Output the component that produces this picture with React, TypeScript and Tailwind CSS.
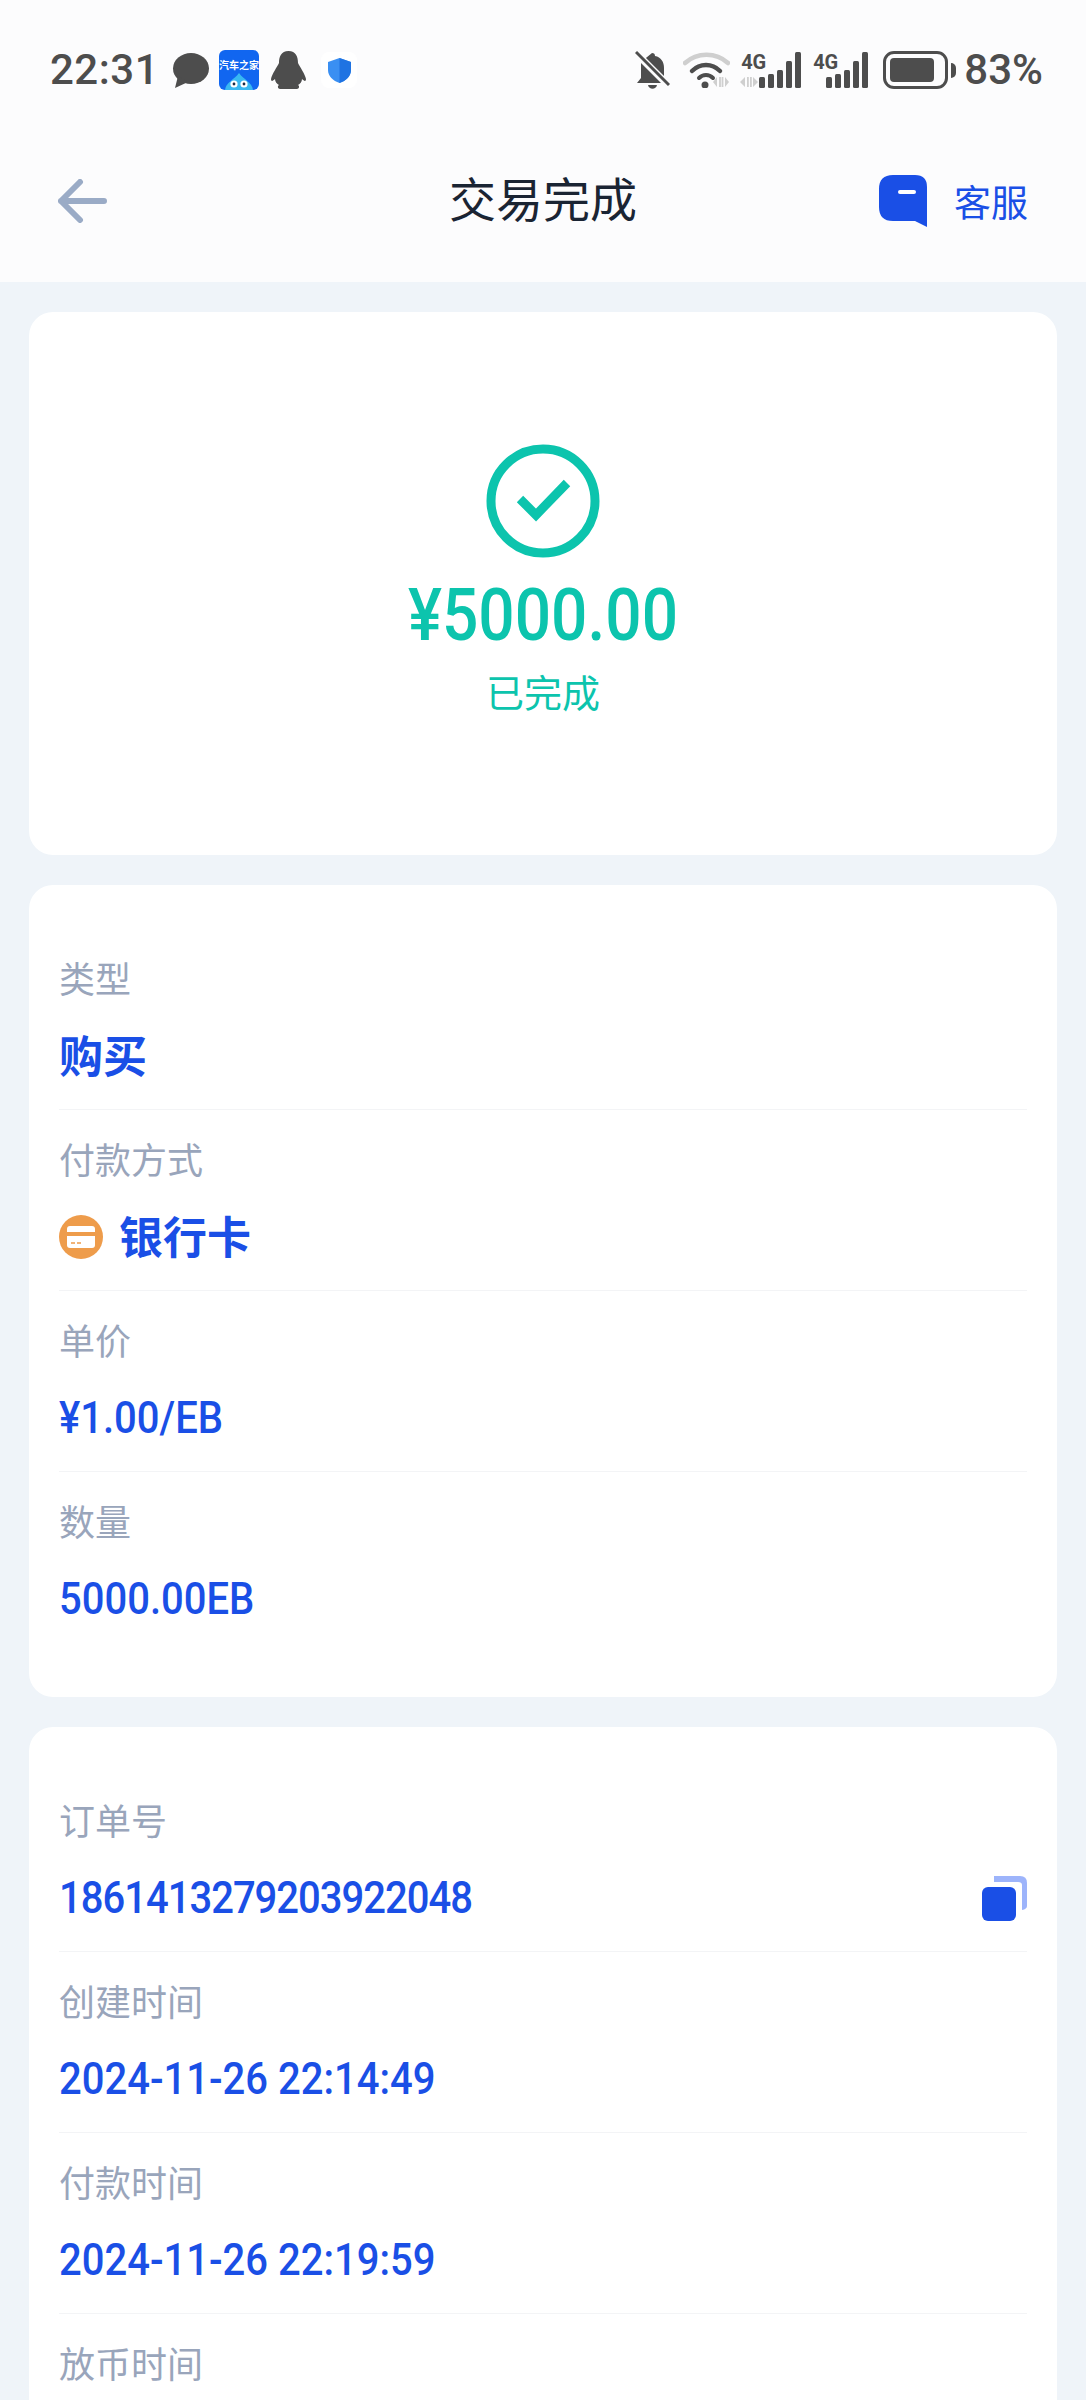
import React from 'react';

const FONT = "font-['Roboto','Noto_Sans_CJK_SC',sans-serif]";

interface DetailRow {
  label: string;
  value?: React.ReactNode;
  action?: React.ReactNode;
}

const ChatBubble = () => (
  <svg width="37" height="36" viewBox="0 0 37 36" fill="#4d4d4d">
    <ellipse cx="19" cy="16.5" rx="18" ry="15.5" />
    <path d="M6 24 L3 36 L16 30 Z" />
  </svg>
);

const AutoHomeBadge = () => (
  <div className="relative flex h-[40px] w-[40px] justify-center overflow-hidden rounded-[6px] bg-[#1166f0]">
    <span className="mt-[10px] text-[10px] leading-[12px] font-bold whitespace-nowrap text-white">汽车之家</span>
    <svg className="absolute bottom-0 left-0" width="40" height="17" viewBox="0 0 40 17">
      <path d="M6 17 C7 9 15 7 20 0 C25 7 33 9 34 17 Z" fill="#38b8f2" />
      <circle cx="15" cy="11" r="3.6" fill="#fff" />
      <circle cx="25" cy="11" r="3.6" fill="#fff" />
      <circle cx="15" cy="11" r="1.4" fill="#1c2a44" />
      <circle cx="25" cy="11" r="1.4" fill="#1c2a44" />
    </svg>
  </div>
);

const Penguin = () => (
  <svg width="35" height="38" viewBox="0 0 35 38" fill="#4d4d4d">
    <path d="M17.5 0 C25 0 27 6 27 12 C29 16 34 23 35 28 C35 31 33 30 31 28 C31 31 29 33 27 34 C29 35 28 38 26 38 L9 38 C7 38 6 35 8 34 C6 33 4 31 4 28 C2 30 0 31 0 28 C1 23 6 16 8 12 C8 6 10 0 17.5 0 Z" />
  </svg>
);

const Shield = () => (
  <div className="flex h-[36px] w-[36px] items-center justify-center rounded-[8px] bg-white">
    <svg width="23" height="25" viewBox="0 0 23 25">
      <path d="M11.5 0 L23 4 V12 C23 18 18 23 11.5 25 C5 23 0 18 0 12 V4 Z" fill="#3a8ff2" />
      <path d="M11.5 0 L23 4 V12 C23 18 18 23 11.5 25 Z" fill="#1f73e2" />
    </svg>
  </div>
);

const MutedBell = () => (
  <svg width="35" height="40" viewBox="0 0 35 40">
    <path d="M17 3 C19 3 20 4 20 6 C26 7 29 12 29 18 V28 L33 33 H2 L6 28 V12 Z" fill="#4d4d4d" />
    <path d="M13 35 H22 C21 40 14 40 13 35 Z" fill="#4d4d4d" />
    <path d="M1 3 L34 36" stroke="#fcfcfd" strokeWidth="7" />
    <path d="M1 2 L34 35" stroke="#4d4d4d" strokeWidth="3" />
  </svg>
);

const Wifi = () => (
  <svg width="47" height="36" viewBox="0 0 47 36" fill="none">
    <path d="M2 11 C14 0 33 0 45 11" stroke="#cfcfcf" strokeWidth="4.5" strokeLinecap="round" />
    <path d="M9 19 C17 11 29 11 37 19" stroke="#4d4d4d" strokeWidth="4.5" strokeLinecap="round" />
    <path d="M16 26 C20 22 26 22 30 26" stroke="#4d4d4d" strokeWidth="4" strokeLinecap="round" />
    <circle cx="22" cy="33" r="3.5" fill="#4d4d4d" />
    <path d="M34 25 L30 30 L34 35 Z M42 25 L46 30 L42 35 Z" fill="#cfcfcf" />
    <path d="M37 25 V35 M39.500 25 V35" stroke="#cfcfcf" strokeWidth="1.8" />
  </svg>
);

// 4G label over five signal bars; the first SIM also shows its data arrows
const Signal = ({ arrows }: { arrows?: boolean }) => {
  const start = arrows ? 19 : 14;
  const bars = [
    { x: 0, y: 25 },
    { x: 9, y: 22 },
    { x: 18, y: 18 },
    { x: 27, y: 9 },
    { x: 36, y: 0 },
  ];
  return (
    <div className={`relative h-[36px] ${arrows ? 'w-[61px]' : 'w-[56px]'}`}>
      <span className="absolute top-[-1px] left-[1px] text-[20px] leading-[22px] font-bold tracking-[-0.3px] text-[#4d4d4d]">4G</span>
      <svg className="absolute top-0 left-0" width="61" height="36" viewBox="0 0 61 36">
        {arrows && (
          <g fill="#cfcfcf">
            <path d="M5 25 L0 30 L5 35 Z M13 25 L18 30 L13 35 Z" />
            <rect x="7" y="25" width="1.800" height="10" />
            <rect x="10" y="25" width="1.800" height="10" />
          </g>
        )}
        {bars.map((bar) => (
          <rect key={bar.x} x={start + bar.x} y={bar.y} width="6" height={36 - bar.y} rx="1.5" fill="#4d4d4d" />
        ))}
      </svg>
    </div>
  );
};

const Battery = () => (
  <div className="flex items-center gap-[3px]">
    <div className="h-[38px] w-[65px] rounded-[11px] border-[3px] border-[#4d4d4d] p-[4px]">
      <div className="h-full w-[44px] rounded-[4px] bg-[#4d4d4d]" />
    </div>
    <div className="h-[15px] w-[5px] rounded-r-full bg-[#4d4d4d]" />
  </div>
);

const BackArrow = () => (
  <svg width="49" height="44" viewBox="0 0 49 44" fill="none" stroke="#9aabc6" strokeWidth="6" strokeLinecap="round" strokeLinejoin="round">
    <path d="M22 3 L3 22 L22 41 M3 22 H46" />
  </svg>
);

const CopyIcon = () => (
  <svg width="45" height="45" viewBox="0 0 45 45">
    <path d="M12 0 H38 Q45 0 45 7 V30 Q45 33 40 34 V9 Q40 6 36 6 H12 Z" fill="#9db4fb" />
    <rect x="0" y="11" width="34" height="34" rx="6" fill="#1a4fe6" />
  </svg>
);

const CardBadge = () => (
  <svg width="44" height="44" viewBox="0 0 44 44">
    <circle cx="22" cy="22" r="22" fill="#ee9c4b" />
    <path d="M8 14 Q8 11 11 11 H33 Q36 11 36 14 V17 H8 Z" fill="#fff" />
    <path d="M8 21 H36 V30 Q36 33 33 33 H11 Q8 33 8 30 Z" fill="#fff" />
    <path d="M12 28 H16 M18 28 H22" stroke="#ee9c4b" strokeWidth="1.500" />
  </svg>
);

const SupportBubble = () => (
  <svg width="48" height="52" viewBox="0 0 48 52">
    <path d="M14 0 H36 Q48 0 48 12 V52 L36 46 H14 Q0 46 0 32 V14 Q0 0 14 0 Z" fill="#1a4fe6" />
    <rect x="19" y="15" width="18" height="4" rx="2" fill="#fff" />
  </svg>
);

const Section = ({ rows }: { rows: DetailRow[] }) => (
  <section className="rounded-[24px] bg-white px-[30px] pt-[44px] pb-[45px]">
    {rows.map((row) => (
      <div key={row.label} className="border-b border-[#f3f4f6] pt-[30px] pb-[25px] last:border-b-0">
        <div className="h-[44px] text-[36px] leading-[44px] text-[#99a5bb]">{row.label}</div>
        {row.value && (
          <div className="mt-[25px] flex h-[56px] items-center justify-between text-[#1a4fe6]">
            {row.value}
            {row.action}
          </div>
        )}
      </div>
    ))}
  </section>
);

const NumberText = ({ children }: { children: React.ReactNode }) => (
  <span className="inline-block origin-left scale-y-[1.12] text-[40px] font-medium">{children}</span>
);

const BoldText = ({ children }: { children: React.ReactNode }) => (
  <span className="mt-[3px] text-[44px] font-bold">{children}</span>
);

const tradeRows: DetailRow[] = [
  { label: '类型', value: <BoldText>购买</BoldText> },
  {
    label: '付款方式',
    value: (
      <span className="flex items-center gap-[16px]">
        <CardBadge />
        <BoldText>银行卡</BoldText>
      </span>
    ),
  },
  { label: '单价', value: <NumberText>¥1.00/EB</NumberText> },
  { label: '数量', value: <NumberText>5000.00EB</NumberText> },
];

const orderRows: DetailRow[] = [
  {
    label: '订单号',
    value: (
      <span className="inline-block origin-left scale-y-[1.12] text-[40px] font-medium tracking-[-1px]">1861413279203922048</span>
    ),
    action: <CopyIcon />,
  },
  { label: '创建时间', value: <NumberText>2024-11-26 22:14:49</NumberText> },
  { label: '付款时间', value: <NumberText>2024-11-26 22:19:59</NumberText> },
  { label: '放币时间' },
];

export default function App() {
  return (
    <div className={`h-[2400px] w-[1086px] overflow-hidden bg-[#eff4f9] ${FONT}`}>
      <header className="bg-[#fcfcfd]">
        <div className="flex h-[120px] items-start justify-between pt-[50px] pr-[43px] pl-[50px]">
          <div className="flex h-[40px] items-center">
            <span className="w-[122px] text-[42px] leading-[40px] font-medium tracking-[0.5px] text-[#4d4d4d]">22:31</span>
            <ChatBubble />
            <div className="ml-[10px]">
              <AutoHomeBadge />
            </div>
            <div className="ml-[12px]">
              <Penguin />
            </div>
            <div className="ml-[15px]">
              <Shield />
            </div>
          </div>
          <div className="flex h-[40px] items-center">
            <MutedBell />
            <div className="ml-[13px]">
              <Wifi />
            </div>
            <div className="ml-[10px]">
              <Signal arrows />
            </div>
            <div className="ml-[11px]">
              <Signal />
            </div>
            <div className="ml-[15px]">
              <Battery />
            </div>
            <span className="ml-[8px] text-[42px] leading-[40px] font-medium text-[#4d4d4d]">83%</span>
          </div>
        </div>
        <div className="relative flex h-[162px] items-center justify-between pr-[58px] pl-[58px]">
          <BackArrow />
          <h1 className="absolute left-0 w-full text-center text-[47px] font-normal text-[#1a2433]">交易完成</h1>
          <div className="flex items-center gap-[27px]">
            <SupportBubble />
            <span className="mt-[7px] text-[37px] text-[#1a4fe6]">客服</span>
          </div>
        </div>
      </header>

      <main className="flex flex-col gap-[30px] px-[29px] pt-[30px]">
        <section className="flex h-[543px] flex-col items-center rounded-[24px] bg-white pt-[132px]">
          <svg width="114" height="114" viewBox="0 0 114 114" fill="none">
            <circle cx="57" cy="57" r="52" stroke="#0cc4ad" strokeWidth="9" />
            <path d="M34 55 L50 71 L81 39" stroke="#0cc4ad" strokeWidth="9" />
          </svg>
          <div className="mt-[13px] h-[90px] origin-center scale-y-[1.12] text-[64px] leading-[90px] font-medium text-[#0cc4ad]">¥5000.00</div>
          <div className="mt-[8px] text-[38px] leading-[50px] text-[#0cc4ad]">已完成</div>
        </section>
        <Section rows={tradeRows} />
        <Section rows={orderRows} />
      </main>
    </div>
  );
}
